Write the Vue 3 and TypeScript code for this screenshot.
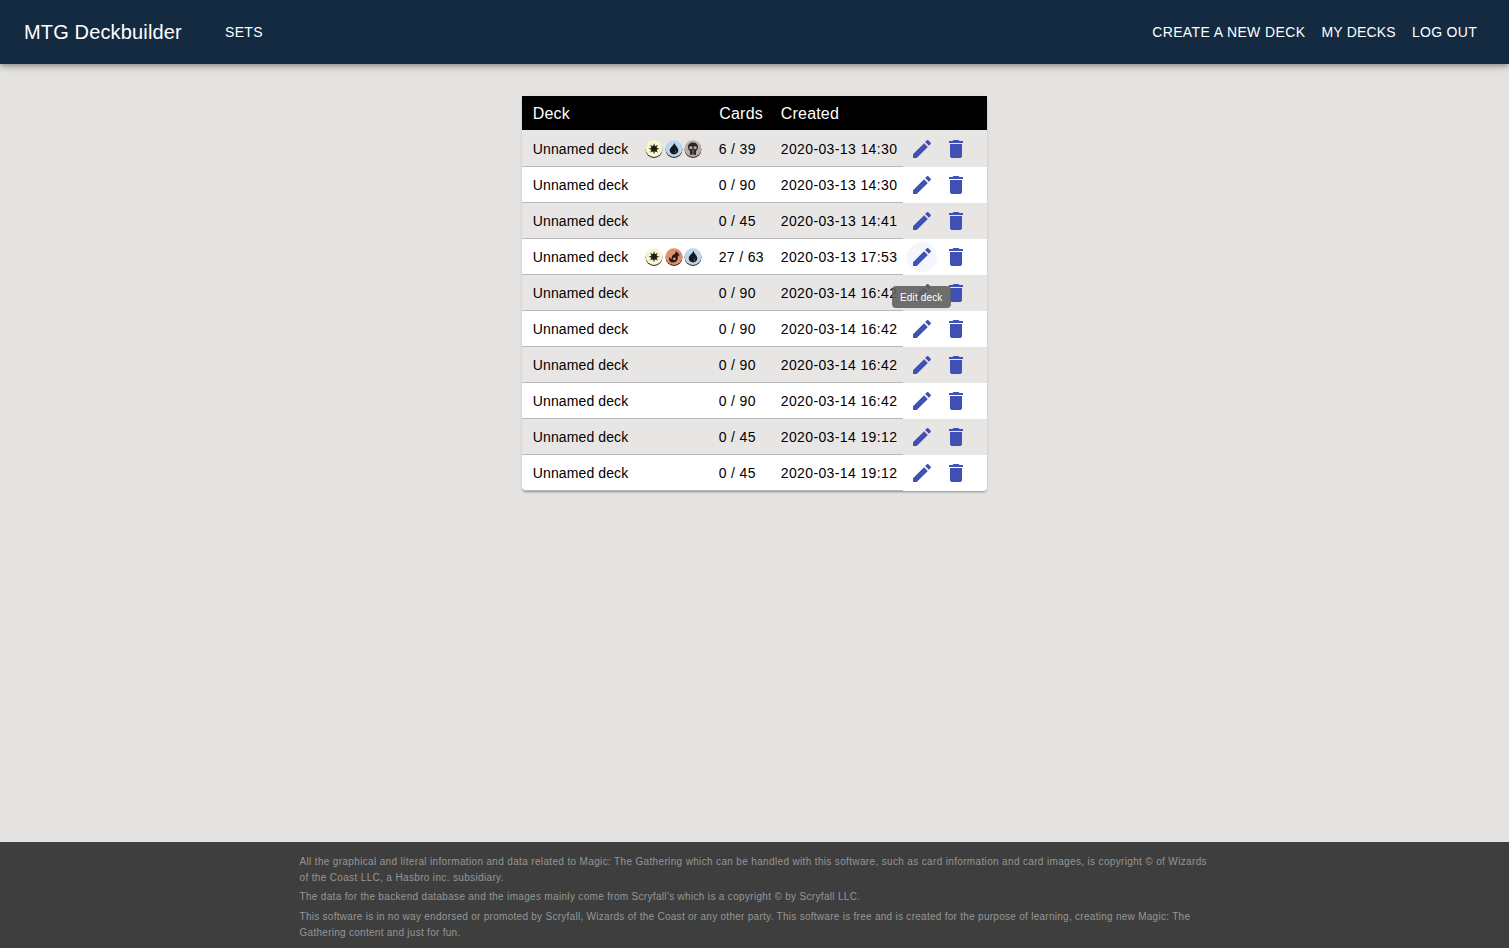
<script setup lang="ts">
interface Deck { cards: string; created: string; mana: string[] }
const decks: Deck[] = [
  { cards: '6 / 39', created: '2020-03-13 14:30', mana: ['w', 'u', 'b'] },
  { cards: '0 / 90', created: '2020-03-13 14:30', mana: [] },
  { cards: '0 / 45', created: '2020-03-13 14:41', mana: [] },
  { cards: '27 / 63', created: '2020-03-13 17:53', mana: ['w', 'r', 'u'] },
  { cards: '0 / 90', created: '2020-03-14 16:42', mana: [] },
  { cards: '0 / 90', created: '2020-03-14 16:42', mana: [] },
  { cards: '0 / 90', created: '2020-03-14 16:42', mana: [] },
  { cards: '0 / 90', created: '2020-03-14 16:42', mana: [] },
  { cards: '0 / 45', created: '2020-03-14 19:12', mana: [] },
  { cards: '0 / 45', created: '2020-03-14 19:12', mana: [] },
]
const rays = [0, 45, 90, 135, 180, 225, 270, 315]
</script>

<template>
  <div class="page">
    <header class="bar">
      <div class="brand">MTG Deckbuilder</div>
      <a class="nav sets">Sets</a>
      <div class="spacer"></div>
      <a class="nav create">Create a new deck</a>
      <a class="nav mine">My decks</a>
      <a class="nav">Log out</a>
    </header>

    <main class="main">
      <div class="card">
        <table class="table">
          <colgroup>
            <col class="c1" /><col class="c2" /><col class="c3" /><col class="c4" />
          </colgroup>
          <thead>
            <tr><th>Deck</th><th class="th-cards">Cards</th><th>Created</th><th></th></tr>
          </thead>
          <tbody>
            <tr v-for="(d, i) in decks" :key="i" :class="{ odd: i % 2 === 0 }">
              <td class="namecell">
                <div class="namewrap">
                  <span class="name">Unnamed deck</span>
                  <span class="mana">
                    <svg v-for="m in d.mana" :key="m" class="sym" viewBox="0 0 18 18">
                      <circle cx="9" cy="9.600" r="8.400" fill="#2a2522" />
                      <template v-if="m === 'w'">
                        <circle cx="9" cy="8.600" r="8.400" fill="#f8f5cf" />
                        <g transform="translate(0 -0.300)">
                          <circle cx="9" cy="9" r="3" fill="#1f1b18" />
                          <path v-for="a in rays" :key="a" d="M9 3.500 10 6.500H8Z" fill="#2a2622" :transform="`rotate(${a} 9 9)`" />
                        </g>
                      </template>
                      <template v-else-if="m === 'u'">
                        <circle cx="9" cy="8.600" r="8.400" fill="#bcd5ec" />
                        <path d="M9.500 2.700C9.700 5.200 13.300 7.400 13.300 10.300 13.300 12.700 11.300 14.400 9 14.400 6.600 14.400 4.700 12.700 4.700 10.500 4.700 7.400 8.600 5.700 9.500 2.700Z" fill="#14171b" />
                        <path d="M11.300 9.800C11.500 11.400 10.600 12.800 9 13.100 10 12.100 10.500 11 11.300 9.800Z" fill="#4f87b8" />
                      </template>
                      <template v-else-if="m === 'b'">
                        <circle cx="9" cy="8.600" r="8.400" fill="#b9aea8" />
                        <path d="M9 2.400C5.900 2.400 4 4.500 4 7.100 4 9 4.900 10.300 6 11V14.800H12V11C13.100 10.300 14 9 14 7.100 14 4.500 12.100 2.400 9 2.400Z" fill="#2a2522" />
                        <circle cx="6.900" cy="7.700" r="1.600" fill="#b0a59f" />
                        <circle cx="11.100" cy="7.700" r="1.600" fill="#b0a59f" />
                        <path d="M9 9.400 10 11.400H8Z" fill="#b0a59f" />
                        <path d="M8.400 12.200H9.600V14.800H8.400Z" fill="#8d827c" />
                      </template>
                      <template v-else>
                        <circle cx="9" cy="8.600" r="8.400" fill="#e0906e" />
                        <path d="M10.600 3.200C13 4.200 14.600 6.300 14.300 8.700 13.800 7.800 13.100 7.500 12.400 7.600 13.300 9.600 13 12 11.200 13.500 9.400 15 6.600 14.900 5 13.400 3.800 12.100 3.700 10 4.800 8.700 4.900 10 5.800 10.800 6.900 11 6.300 9 7.200 7.200 8.800 6.500 10 6 11 5 10.600 3.200Z" fill="#2a1a14" />
                        <circle cx="9.300" cy="10.800" r="1.400" fill="#e0906e" />
                      </template>
                    </svg>
                  </span>
                </div>
              </td>
              <td class="count">{{ d.cards }}</td>
              <td class="date">{{ d.created }}</td>
              <td class="actions">
                <div class="actionwrap">
                  <span class="iconbtn" :class="{ hover: i === 3 }">
                    <svg viewBox="0 0 24 24" class="icon"><path d="M20.710 7.040C21.100 6.650 21.100 6 20.710 5.630L18.370 3.290C18 2.900 17.350 2.900 16.960 3.290L15.120 5.120 18.870 8.870M3 17.250V21H6.750L17.810 9.930 14.060 6.180 3 17.250Z" /></svg>
                  </span>
                  <span class="iconbtn">
                    <svg viewBox="0 0 24 24" class="icon"><path d="M19 4H15.500L14.500 3H9.500L8.500 4H5V6H19M6 19A2 2 0 0 0 8 21H16A2 2 0 0 0 18 19V7H6V19Z" /></svg>
                  </span>
                  <span v-if="i === 3" class="tooltip">Edit deck</span>
                </div>
              </td>
            </tr>
          </tbody>
        </table>
      </div>
    </main>

    <footer class="footer">
      <div class="foot-inner">
        <p class="p1">All the graphical and literal information and data related to Magic: The Gathering which can be handled with this software, such as card information and card images, is copyright © of Wizards of the Coast LLC, a Hasbro inc. subsidiary.</p>
        <p class="p2">The data for the backend database and the images mainly come from Scryfall's which is a copyright © by Scryfall LLC.</p>
        <p class="p3">This software is in no way endorsed or promoted by Scryfall, Wizards of the Coast or any other party. This software is free and is created for the purpose of learning, creating new Magic: The Gathering content and just for fun.</p>
      </div>
    </footer>
  </div>
</template>

<style>
html, body { margin: 0; padding: 0; }
</style>

<style scoped>
.page {
  min-height: 948px;
  display: flex;
  flex-direction: column;
  background: #e4e3e1;
  font-family: "Liberation Sans", Arial, sans-serif;
  color: #000;
}
.bar {
  height: 64px;
  background: #132a41;
  display: flex;
  align-items: center;
  padding: 0 32px 0 24px;
  color: #fff;
  box-shadow: 0 2px 4px -1px rgba(0,0,0,.2), 0 4px 5px 0 rgba(0,0,0,.14), 0 1px 10px 0 rgba(0,0,0,.12);
  position: relative;
  z-index: 2;
}
.brand { font-size: 20px; letter-spacing: 0.15px; width: 201px; }
.spacer { flex: 1; }
.nav {
  font-size: 14px;
  text-transform: uppercase;
  letter-spacing: 0.3px;
  margin-left: 16px;
}
.nav.create { letter-spacing: 0.38px; }
.nav.mine { letter-spacing: 0.2px; }
.sets { margin-left: 0; }
.main {
  flex: 1;
  display: flex;
  justify-content: center;
  align-items: flex-start;
  padding-top: 32px;
}
.card {
  width: 465px;
  background: #fff;
  border-radius: 4px;
  box-shadow: 0 2px 2px -1px rgba(0,0,0,.3), 0 1px 3px 0 rgba(0,0,0,.12);
  margin-left: -0.5px;
}
.table {
  width: 465px;
  table-layout: fixed;
  border-collapse: separate;
  border-spacing: 0;
  font-size: 14px;
}
.c1 { width: 186px; }
.c2 { width: 62px; }
.c3 { width: 133px; }
.c4 { width: 84px; }
th {
  background: #000;
  color: #fff;
  font-weight: 400;
  font-size: 16px;
  letter-spacing: 0.2px;
  height: 32px;
  padding: 2px 0 0 11px;
  text-align: left;
}
th.th-cards { padding-left: 11.5px; }
td {
  height: 35px;
  padding: 0 0 0 11px;
  border-bottom: 1px solid #b9b9b9;
  white-space: nowrap;
  overflow: visible;
}
tbody tr:first-child td { padding-top: 1px; }
tr.odd td { background: #e7e6e5; }
td.actions { border-bottom: none; height: 36px; padding-left: 0; }
tbody tr:last-child td.actions { border-radius: 0 0 4px 0; }
tbody tr:last-child td.namecell { border-radius: 0 0 0 4px; }
.name { letter-spacing: 0.12px; }
.count { letter-spacing: 0.33px; }
.date { letter-spacing: 0.375px; }
.namewrap { display: flex; align-items: center; justify-content: space-between; padding-right: 5.500px; }
.mana { display: flex; gap: 1.500px; margin-top: 1px; }
.sym { width: 18px; height: 18px; display: block; }
.actionwrap {
  position: relative;
  display: flex;
  align-items: center;
  padding-left: 4px;
  gap: 4px;
}
.iconbtn {
  width: 30px;
  height: 30px;
  border-radius: 50%;
  display: flex;
  align-items: center;
  justify-content: center;
}
.iconbtn.hover { background: #f5f6fc; }
.icon { width: 24px; height: 24px; fill: #3f51b5; display: block; }
.tooltip {
  position: absolute;
  left: -11px;
  top: 44px;
  width: 59px;
  height: 22px;
  line-height: 23px;
  text-align: center;
  background: rgba(97,97,97,.9);
  color: #fff;
  font-size: 10px;
  letter-spacing: 0.15px;
  border-radius: 4px;
  z-index: 3;
}
.footer {
  height: 106px;
  box-sizing: border-box;
  background: #3e3e3e;
  color: #969696;
  padding-top: 12px;
}
.foot-inner {
  width: 911px;
  margin: 0 auto;
  padding-left: 1px;
  font-size: 10px;
  letter-spacing: 0.333px;
  line-height: 16px;
}
.foot-inner p { margin: 0 0 3px; }
.foot-inner .p1 { letter-spacing: 0.348px; }
.foot-inner .p2 { letter-spacing: 0.323px; margin-bottom: 4px; }
.foot-inner .p3 { letter-spacing: 0.278px; }
</style>
